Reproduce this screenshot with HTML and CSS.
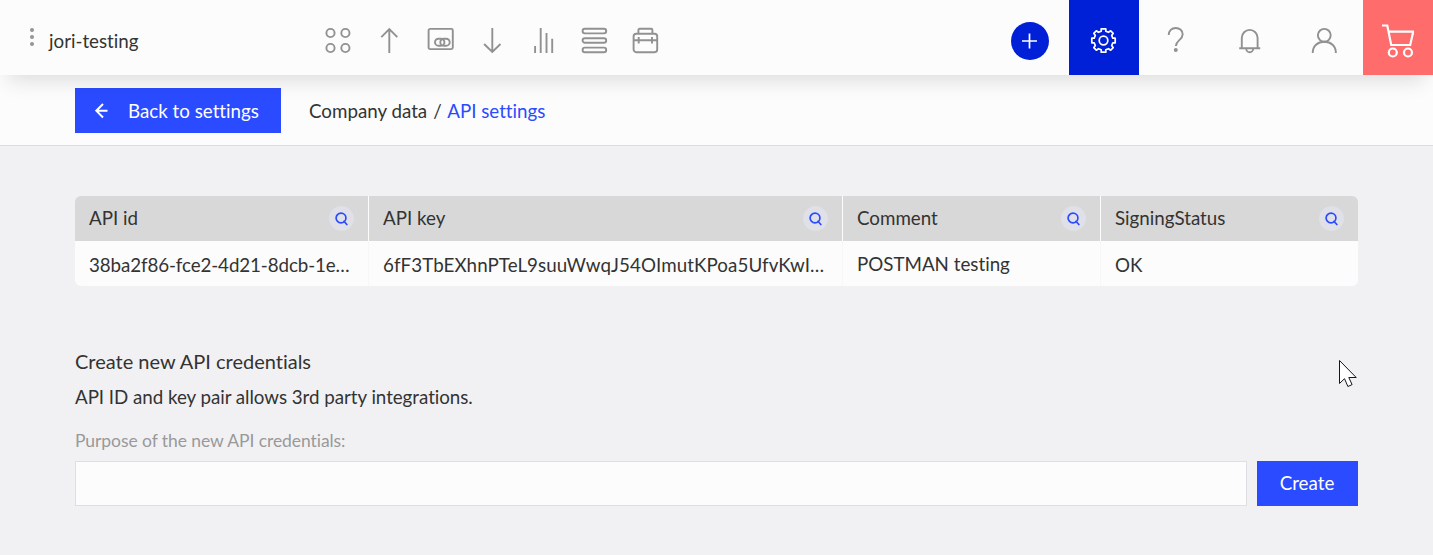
FILE: index.html
```html
<!DOCTYPE html>
<html lang="en">
<head>
<meta charset="utf-8">
<title>API settings</title>
<link rel="stylesheet" href="styles.css">
</head>
<body>
<header class="topbar">
  <div class="company">
    <svg class="dots" width="6" height="20" viewBox="0 0 6 20"><circle cx="3" cy="3" r="2"/><circle cx="3" cy="10" r="2"/><circle cx="3" cy="17" r="2"/></svg>
    <span class="company-name">jori-testing</span>
  </div>
  <nav class="modules">
    <svg class="icon" viewBox="0 0 26 25"><circle cx="5.5" cy="5" r="4.1"/><circle cx="20.4" cy="5" r="4.1"/><circle cx="5.5" cy="20" r="4.1"/><circle cx="20.4" cy="20" r="4.1"/></svg>
    <svg class="icon" viewBox="0 0 26 25"><path d="M13.3 25V1M5.3 9.2l8-8 8 8"/></svg>
    <svg class="icon" viewBox="0 0 26 25"><rect x="1.6" y=".9" width="24.2" height="20.2" rx="1.5"/><rect x="8" y="10.7" width="9.4" height="7" rx="3.5"/><rect x="13.3" y="10.7" width="9.4" height="7" rx="3.5"/></svg>
    <svg class="icon" viewBox="0 0 26 25"><path d="M13.3 0v24M5.1 16l8.2 8 8.2-8"/></svg>
    <svg class="icon" viewBox="0 0 26 25"><path d="M5.1 18v7M10.7 0v25M16.5 5v20M22.2 10.7V25"/></svg>
    <svg class="icon" viewBox="0 0 26 25"><rect x="1.6" y=".8" width="23.6" height="4.6" rx="2.3"/><rect x="1.6" y="10.2" width="23.6" height="4.6" rx="2.3"/><rect x="1.6" y="19.6" width="23.6" height="4.6" rx="2.3"/></svg>
    <svg class="icon" viewBox="0 0 26 25"><rect x="1.6" y="5.8" width="23.6" height="18.4" rx="2.6"/><path d="M6.4 5.5V2.1Q6.4.8 7.700.8h11.400q1.300 0 1.300 1.300v3.400M1.600 12.200h23.600M6.700 9v6.500M20 9v6.500"/></svg>
  </nav>
  <div class="actions">
    <div class="action add-cell"><span class="add"><svg width="16" height="16" viewBox="0 0 16 16"><path d="M7.500 .500v15M0 8h15"/></svg></span></div>
    <div class="action settings-cell"><svg class="icon" viewBox="0 0 26 25"><circle cx="12.500" cy="12.500" r="4.300"/><path d="M10.200.8h4.600v2.400l2.700 1.100 2.200-1.500 2.500 2.500-1.500 2.200 1.100 2.700h2.400v4.600h-2.400l-1.100 2.700 1.500 2.200-2.500 2.500-2.200-1.500-2.700 1.100v2.400h-4.600v-2.400l-2.700-1.100-2.200 1.500-2.500-2.500 1.500-2.200-1.100-2.700H.8v-4.600h2.400l1.100-2.700-1.500-2.200 2.500-2.500 2.200 1.500 2.700-1.100z" stroke-linejoin="round"/></svg></div>
    <div class="action help-cell"><svg class="icon" viewBox="0 0 26 25"><path d="M5.700 6.900C5.700 2.700 8.700 0 12.700 0s7 2.600 7 6.300c0 5.700-6.800 6-6.800 11.700"/><circle class="fill" cx="12.800" cy="22" r="2"/></svg></div>
    <div class="action bell-cell"><svg class="icon" viewBox="0 0 26 25"><path d="M2.200 20.200H23.200M4.800 20V9.800a7.900 7.900 0 0 1 15.800 0V20M9.200 20.500a3.500 3.800 0 0 0 7 0"/></svg></div>
    <div class="action user-cell"><svg class="icon" viewBox="0 0 26 25"><circle cx="13.300" cy="7.300" r="6.400"/><path d="M1.700 25c0-7 5-11.300 11.600-11.300S24.900 18 24.900 25"/></svg></div>
    <div class="action cart-cell"><svg width="32" height="34" viewBox="0 0 32 34"><path d="M0 1.500h5.300L9.200 21h19l3-13.300H6.700"/><circle cx="10.800" cy="28.500" r="4"/><circle cx="26" cy="28.500" r="4"/></svg></div>
  </div>
</header>
<div class="subbar">
  <a class="button back"><svg width="13" height="16" viewBox="0 0 13 16"><path d="M12.500 7.700H1.500M8 1L1.300 7.700 8 14.500"/></svg>Back to settings</a>
  <div class="crumbs"><span>Company data</span><span class="slash">/</span><a class="current">API settings</a></div>
</div>
<main class="content">
  <div class="table">
    <div class="row head">
      <div class="cell"><span class="name">API id</span><span class="search"><svg width="13" height="14" viewBox="0 0 13 14"><circle cx="6" cy="6" r="4.900"/><path d="M8.500 8.700L12.300 13"/></svg></span></div>
      <div class="cell"><span class="name">API key</span><span class="search"><svg width="13" height="14" viewBox="0 0 13 14"><circle cx="6" cy="6" r="4.900"/><path d="M8.500 8.700L12.300 13"/></svg></span></div>
      <div class="cell"><span class="name">Comment</span><span class="search"><svg width="13" height="14" viewBox="0 0 13 14"><circle cx="6" cy="6" r="4.900"/><path d="M8.500 8.700L12.300 13"/></svg></span></div>
      <div class="cell"><span class="name">SigningStatus</span><span class="search"><svg width="13" height="14" viewBox="0 0 13 14"><circle cx="6" cy="6" r="4.900"/><path d="M8.500 8.700L12.300 13"/></svg></span></div>
    </div>
    <div class="row body">
      <div class="cell"><span class="long id">38ba2f86-fce2-4d21-8dcb-1e…</span></div>
      <div class="cell"><span class="long key">6fF3TbEXhnPTeL9suuWwqJ54OImutKPoa5UfvKwI…</span></div>
      <div class="cell"><span>POSTMAN testing</span></div>
      <div class="cell"><span class="long">OK</span></div>
    </div>
  </div>
  <section class="create">
    <h2 class="title">Create new API credentials</h2>
    <p class="intro">API ID and key pair allows 3rd party integrations.</p>
    <label class="label" for="purpose">Purpose of the new API credentials:</label>
    <div class="form"><input class="input" id="purpose" type="text"><button class="button submit">Create</button></div>
  </section>
</main>
<svg class="cursor" width="20" height="30" viewBox="0 0 20 30"><path d="M.500.500v23l5-4.800 3.400 7.800 4.200-1.900-3.300-7.100h7.400z"/></svg>
</body>
</html>
```
FILE: styles.css
```css
* { box-sizing: border-box; }
body { margin: 0; height: 555px; overflow: hidden; background: #f1f1f4; color: #333; font: 18.75px/24px Lato, sans-serif; font-variant-ligatures: none; }
svg { display: block; flex: none; fill: none; }
.topbar { position: relative; display: flex; height: 75px; background: #fcfcfc; box-shadow: 0 14px 20px -8px rgba(0, 0, 0, .12); }
.company { width: 325px; display: flex; padding-left: 29px; }
.dots { margin-top: 27px; fill: #949494; }
.company-name { margin: 29px 0 0 14px; }
.modules { display: flex; gap: 25.2px; padding-top: 28px; }
.icon { width: 26px; height: 25px; stroke: #919191; stroke-width: 1.9; overflow: visible; }
.icon .fill { fill: #919191; stroke: none; }
.actions { display: flex; margin-left: auto; }
.action { display: flex; justify-content: center; align-items: center; padding-top: 6px; }
.add-cell { width: 78px; }
.add { display: flex; width: 38px; height: 38px; align-items: center; justify-content: center; border-radius: 50%; background: #0020d7; stroke: #fff; stroke-width: 1.7; }
.settings-cell { width: 70px; background: #0020d7; }
.settings-cell .icon { stroke: #fff; stroke-width: 1.7; }
.help-cell { width: 73px; }
.bell-cell { width: 75px; }
.user-cell { width: 76px; padding-right: 2px; }
.cart-cell { width: 70px; background: #ff6c6c; stroke: #fff; stroke-width: 2.2; }
.subbar { display: flex; height: 71px; padding: 13px 75px 0; background: #fcfcfc; border-bottom: 1px solid #dcdce0; }
.button { display: flex; height: 45px; align-items: center; border: 0; padding: 1px 0 0; background: #2a4bff; color: #fff; font: inherit; font-variant-ligatures: none; }
.back { width: 206px; padding-left: 19.5px; gap: 20.5px; }
.back svg { stroke: #fff; stroke-width: 2; }
.crumbs { display: flex; margin-left: 28px; padding-top: 11px; }
.slash { margin: 0 5.5px 0 6px; }
.current { color: #2a4bff; }
.content { padding: 50px 75px 0; }
.table { border-radius: 6px; overflow: hidden; }
.row { display: grid; grid-template-columns: 294px 474px 258px 257px; height: 45px; }
.cell { display: flex; align-items: center; justify-content: space-between; padding: 0 14px; border-right: 1px solid #fcfcfc; white-space: nowrap; }
.cell:last-child { border-right: 0; }
.head { background: #d8d8d8; }
.name { padding-bottom: 2px; }
.body { background: #fcfcfc; }
.body .cell { padding-right: 0; border-color: #f7f7f8; }
.long { padding-top: 3px; }
.id { letter-spacing: -.1px; }
.key { letter-spacing: .08px; }
.search { display: flex; width: 25px; height: 25px; align-items: center; justify-content: center; border-radius: 50%; background: #dfe0e8; stroke: #2a4bff; stroke-width: 1.7; }
.create { padding-top: 63px; }
.title { margin: 0; font-size: 20px; line-height: 24px; font-weight: 400; }
.intro { margin: 12px 0 0; letter-spacing: -.04px; }
.label { display: block; margin-top: 20px; font-size: 17.5px; line-height: 24px; color: #999; letter-spacing: -.07px; }
.form { display: flex; gap: 10px; margin-top: 8px; }
.input { flex: 1; height: 45px; border: 1px solid #dedee3; background: #fcfcfc; padding: 0 14px; font: inherit; }
.submit { width: 101px; justify-content: center; padding: 0 1px 1px 0; }
.cursor { position: absolute; left: 1339px; top: 360px; fill: #fff; stroke: #15151f; stroke-width: 1; }
```
